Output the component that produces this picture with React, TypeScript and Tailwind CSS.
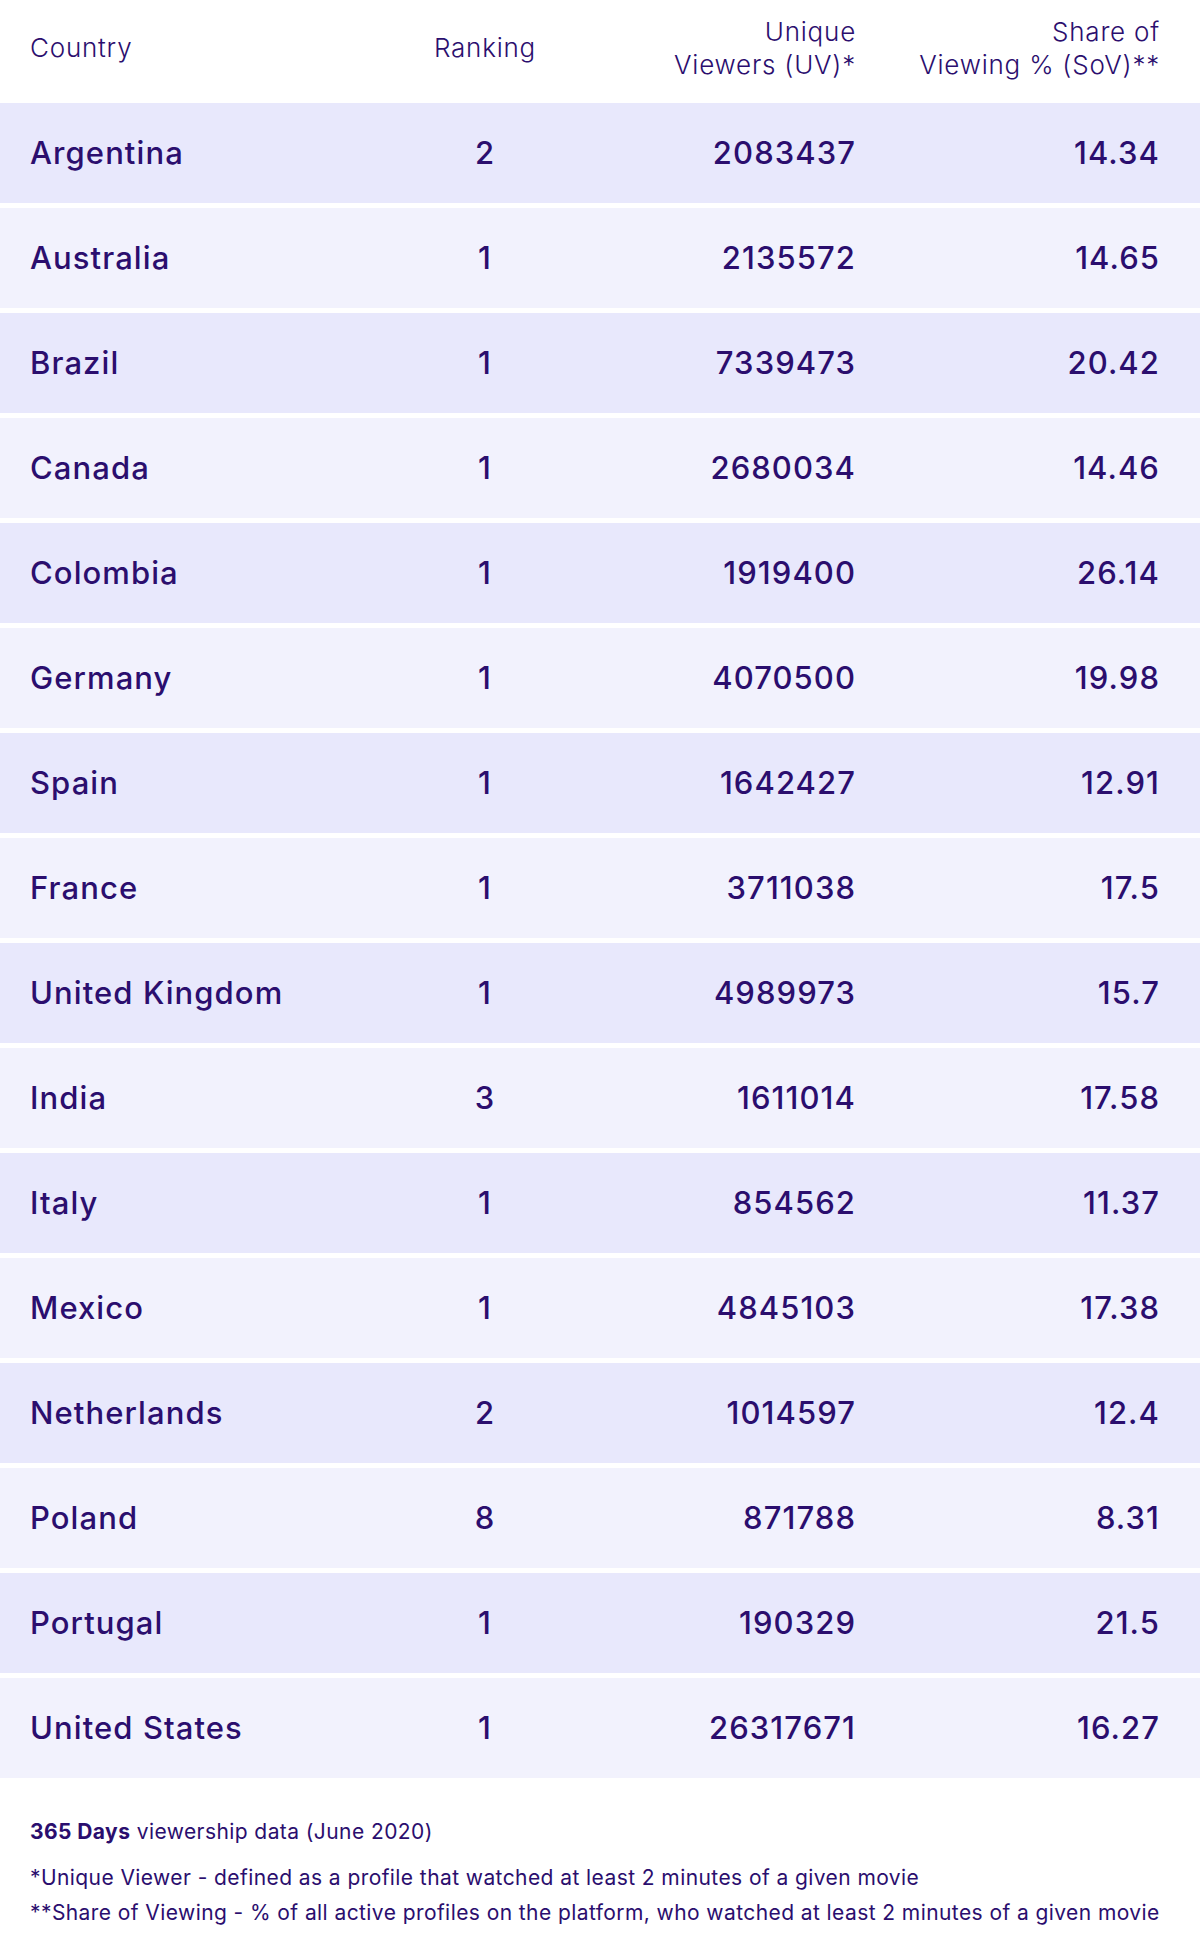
const rows = [
  { country: "Argentina", rank: 2, uv: "2083437", sov: "14.34" },
  { country: "Australia", rank: 1, uv: "2135572", sov: "14.65" },
  { country: "Brazil", rank: 1, uv: "7339473", sov: "20.42" },
  { country: "Canada", rank: 1, uv: "2680034", sov: "14.46" },
  { country: "Colombia", rank: 1, uv: "1919400", sov: "26.14" },
  { country: "Germany", rank: 1, uv: "4070500", sov: "19.98" },
  { country: "Spain", rank: 1, uv: "1642427", sov: "12.91" },
  { country: "France", rank: 1, uv: "3711038", sov: "17.5" },
  { country: "United Kingdom", rank: 1, uv: "4989973", sov: "15.7" },
  { country: "India", rank: 3, uv: "1611014", sov: "17.58" },
  { country: "Italy", rank: 1, uv: "854562", sov: "11.37" },
  { country: "Mexico", rank: 1, uv: "4845103", sov: "17.38" },
  { country: "Netherlands", rank: 2, uv: "1014597", sov: "12.4" },
  { country: "Poland", rank: 8, uv: "871788", sov: "8.31" },
  { country: "Portugal", rank: 1, uv: "190329", sov: "21.5" },
  { country: "United States", rank: 1, uv: "26317671", sov: "16.27" },
];

const cols = "grid grid-cols-[370px_170px_286px_304px] pl-[30px] pr-[40px]";

export default function App() {
  return (
    <div className="min-h-screen bg-white text-[#2b0e6e] font-['Inter',sans-serif]">
      {/* header */}
      <div className={`${cols} h-[103px] pb-[8px] items-center text-[26px] leading-[33px] font-light tracking-[0.03em]`}>
        <div>Country</div>
        <div className="text-center">Ranking</div>
        <div className="text-right">
          Unique
          <br />
          Viewers (UV)*
        </div>
        <div className="text-right">
          Share of
          <br />
          Viewing % (SoV)**
        </div>
      </div>

      {/* rows */}
      <div className="flex flex-col gap-[5px]">
        {rows.map((r, i) => (
          <div
            key={r.country}
            className={`${cols} h-[100px] items-center text-[31px] font-medium tracking-[0.035em] ${
              i % 2 === 0 ? "bg-[#e8e8fc]" : "bg-[#f2f2fd]"
            }`}
          >
            <div>{r.country}</div>
            <div className="text-center">{r.rank}</div>
            <div className="text-right">{r.uv}</div>
            <div className="text-right">{r.sov}</div>
          </div>
        ))}
      </div>

      {/* notes */}
      <div className="pl-[30px] pt-[42px] text-[21px] tracking-[0.02em] whitespace-nowrap">
        <p className="leading-[24px]">
          <span className="font-bold">365 Days</span> viewership data (June 2020)
        </p>
        <p className="mt-[16px] leading-[35px]">
          *Unique Viewer - defined as a profile that watched at least 2 minutes of a given movie
        </p>
        <p className="leading-[35px]">
          **Share of Viewing - % of all active profiles on the platform, who watched at least 2 minutes of a given movie
        </p>
      </div>
    </div>
  );
}
